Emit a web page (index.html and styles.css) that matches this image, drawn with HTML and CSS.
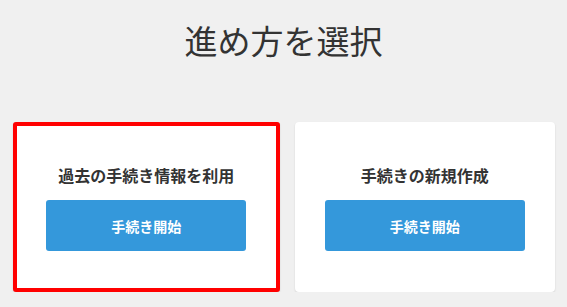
FILE: index.html
```html
<!DOCTYPE html>
<html lang="ja">
<head>
    <meta charset="UTF-8">
    <meta name="viewport" content="width=device-width, initial-scale=1.0">
    <title>進め方を選択</title>
    <link rel="stylesheet" href="styles.css">
</head>
<body>

    <div class="page">
        <h1 class="page-title">進め方を選択</h1>

        <div class="options">
            <div class="option-card selected">
                <h2 class="option-title">過去の手続き情報を利用</h2>
                <button class="start-btn">手続き開始</button>
            </div>
            <div class="option-card">
                <h2 class="option-title">手続きの新規作成</h2>
                <button class="start-btn">手続き開始</button>
            </div>
        </div>
    </div>

</body>
</html>
```

FILE: styles.css
```css
:root {
    --bg: #f0f0f0;
    --text: #333333;
    --blue: #3498db;
    --red: #ff0000;
    --white: #ffffff;
}

body {
    margin: 0;
    font-family: "Noto Sans CJK JP", "Noto Sans", sans-serif;
    background-color: var(--bg);
    color: var(--text);
}

.page {
    width: 542px;
    margin: 0 auto;
}

.page-title {
    margin: 0;
    padding-top: 16px;
    font-size: 33px;
    line-height: 48px;
    font-weight: 400;
    text-align: center;
}

.options {
    display: flex;
    gap: 15px;
    margin-top: 58px;
}

.option-card {
    flex: 1 1 0;
    display: flex;
    flex-direction: column;
    align-items: center;
    justify-content: center;
    padding: 37px 0;
    background-color: var(--white);
    border-radius: 4px;
    box-shadow: 0 1px 2px rgba(0, 0, 0, 0.12);
}

/* the chosen option gets a red frame */
.option-card.selected {
    border: 4px solid var(--red);
    border-radius: 3px;
}

.option-title {
    margin: 0 0 13px;
    font-size: 16px;
    line-height: 24px;
    font-weight: 700;
}

.start-btn {
    width: 200px;
    height: 51px;
    border: none;
    border-radius: 3px;
    background-color: var(--blue);
    color: var(--white);
    font-family: inherit;
    font-size: 14px;
    font-weight: 700;
    cursor: pointer;
}
```
